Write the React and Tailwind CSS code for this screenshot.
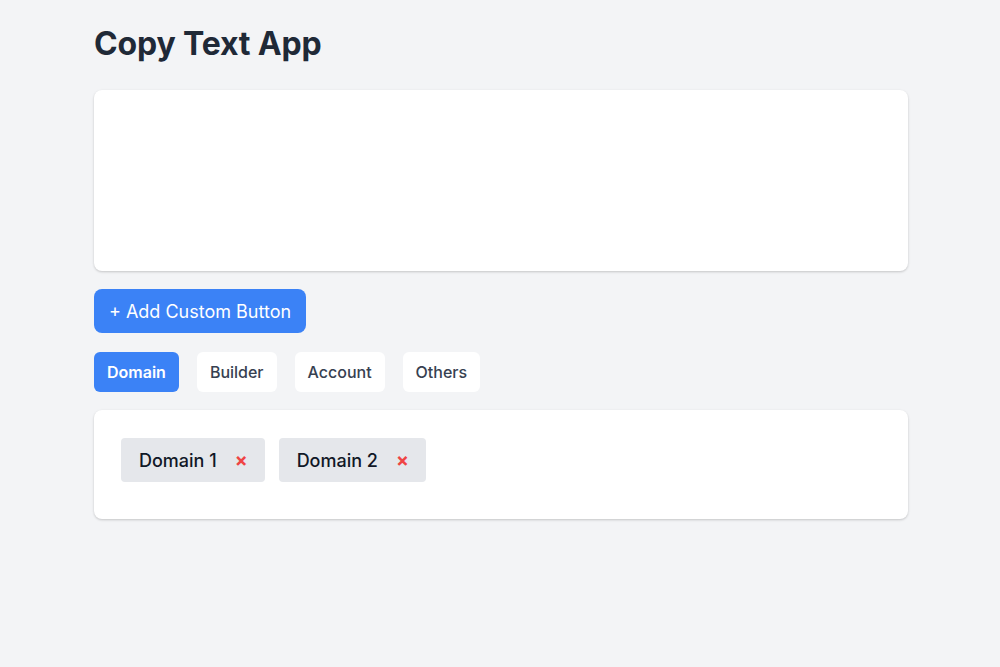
import { useState } from "react";

const tabs = ["Domain", "Builder", "Account", "Others"];

export default function App() {
  const [active, setActive] = useState("Domain");
  const [items] = useState(["Domain 1", "Domain 2"]);

  return (
    <div className="min-h-screen bg-[#f3f4f6] font-['Inter',sans-serif]">
      <div className="ml-[94px] w-[814px] pt-[24px]">
        <h1 className="text-[32px] font-bold text-[#1f2937] leading-[40px] tracking-[-0.15px]">Copy Text App</h1>

        <div className="mt-[26px] h-[181px] rounded-lg bg-white shadow-[0_1px_3px_rgba(0,0,0,0.12),0_1px_2px_rgba(0,0,0,0.08)]" />

        <button className="mt-[18px] h-[44px] w-[212px] rounded-lg bg-[#3b82f6] text-[18px] text-white">
          + Add Custom Button
        </button>

        <div className="mt-[19px] flex gap-[18px]">
          {tabs.map((t) => (
            <button
              key={t}
              onClick={() => setActive(t)}
              className={
                active === t
                  ? "h-[40px] rounded-md bg-[#3b82f6] px-[13px] text-[16px] font-semibold text-white"
                  : "h-[40px] rounded-md bg-white px-[13px] text-[16px] font-medium text-[#374151]"
              }
            >
              {t}
            </button>
          ))}
        </div>

        <div className="mt-[18px] flex gap-[14px] rounded-lg bg-white px-[27px] pt-[28px] pb-[37px] shadow-[0_1px_3px_rgba(0,0,0,0.12),0_1px_2px_rgba(0,0,0,0.08)]">
          {items.map((it) => (
            <div key={it} className="flex h-[44px] items-center rounded bg-[#e5e7eb] pl-[18px] pr-[17px]">
              <span className="text-[18px] font-medium text-[#111827]">{it}</span>
              <span className="ml-[18px] text-[19px] font-bold leading-none text-[#ef4444]">×</span>
            </div>
          ))}
        </div>
      </div>
    </div>
  );
}
